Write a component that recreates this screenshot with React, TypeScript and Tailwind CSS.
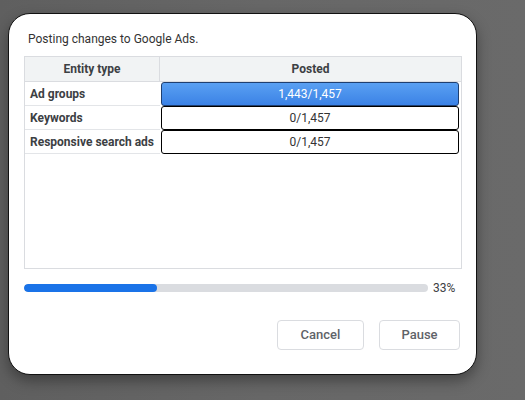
const rows = [
    { name: "Ad groups", posted: "1,443/1,457", active: true },
    { name: "Keywords", posted: "0/1,457", active: false },
    { name: "Responsive search ads", posted: "0/1,457", active: false },
]

function PostedCell({ value, active }: { value: string, active: boolean }) {
    return (
        <div
            className={
                active
                    ? "h-[24px] mx-[1px] flex items-center justify-center rounded-[3px] border border-[#1f3f70] bg-gradient-to-b from-[#5aa0f2] to-[#3b82e6] text-white text-[12px]"
                    : "h-[24px] mx-[1px] flex items-center justify-center rounded-[3px] border border-black bg-white text-[#333] text-[12px]"
            }
        >
            {value}
        </div>
    )
}

export default function App() {
    return (
        <div
            className="min-h-[400px] w-[525px] bg-gradient-to-r from-[#5f5f5f] via-[#676767] to-[#6a6a6a] pl-[8px] pt-[13px] overflow-hidden"
            style={{ fontFamily: "Roboto, 'Liberation Sans', Arial, sans-serif" }}
        >
            {/* dialog */}
            <div className="w-[469px] h-[362px] bg-white rounded-[22px] border border-[#111] shadow-[0_6px_14px_rgba(0,0,0,0.35)] pl-[15px] pr-[14px] pt-[16px] flex flex-col">
                <div className="text-[12px] text-[#333] leading-[18px] ml-[4px]">
                    Posting changes to Google Ads.
                </div>

                {/* entity table */}
                <div className="mt-[8px] h-[213px] w-[438px] border border-[#dadce0] flex flex-col">
                    <div className="flex h-[25px] bg-[#f1f3f4] border-b border-[#dadce0] text-[12px] font-bold text-[#3c4043]">
                        <div className="w-[135px] border-r border-[#dadce0] flex items-center justify-center">Entity type</div>
                        <div className="flex-1 flex items-center justify-center">Posted</div>
                    </div>
                    {rows.map((r) => (
                        <div key={r.name} className="flex h-[24px]">
                            <div className="w-[135px] border-b border-[#e3e5e8] flex items-center px-[5px] text-[12px] font-bold text-[#3c4043] whitespace-nowrap">
                                {r.name}
                            </div>
                            <div className="flex-1 pr-[1px]">
                                <PostedCell value={r.posted} active={r.active} />
                            </div>
                        </div>
                    ))}
                </div>

                {/* progress */}
                <div className="mt-[10px] flex items-center gap-[5px]">
                    <div className="w-[404px] h-[8px] rounded-full bg-[#dadce0] overflow-hidden">
                        <div className="h-full w-[33%] rounded-full bg-[#1a73e8]" />
                    </div>
                    <span className="text-[12px] text-[#3c4043]">33%</span>
                </div>

                {/* actions */}
                <div className="mt-[23px] flex justify-end gap-[15px] pr-[2px]">
                    <button className="w-[87px] h-[30px] rounded-[4px] border border-[#dadce0] bg-white text-[13px] font-medium text-[#5f6368]">
                        Cancel
                    </button>
                    <button className="w-[81px] h-[30px] rounded-[4px] border border-[#dadce0] bg-white text-[13px] font-medium text-[#5f6368]">
                        Pause
                    </button>
                </div>
            </div>
        </div>
    )
}
